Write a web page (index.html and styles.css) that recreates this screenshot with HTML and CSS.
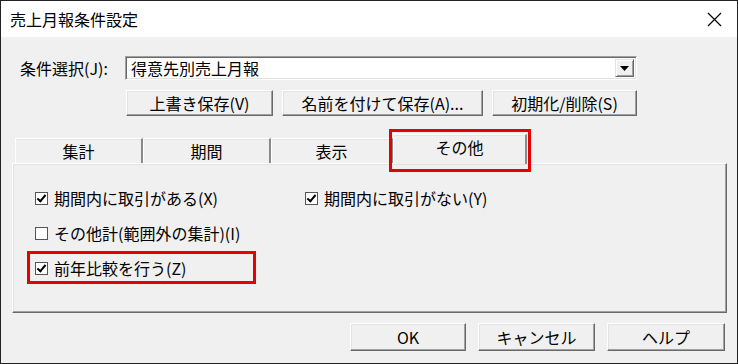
FILE: index.html
```html
<!DOCTYPE html>
<html lang="ja">
<head>
    <meta charset="UTF-8">
    <title>売上月報条件設定</title>
    <link rel="stylesheet" href="styles.css">
</head>
<body>
    <div class="dialog">
        <div class="titlebar">
            <span class="title">売上月報条件設定</span>
            <svg class="close" width="15" height="15" viewBox="0 0 15 15">
                <path d="M1 1 L14 14 M14 1 L1 14" stroke="#000" stroke-width="1.2" fill="none"/>
            </svg>
        </div>
        <div class="body">
            <div class="cond-row">
                <span class="cond-label">条件選択(J):</span>
                <div class="combo">
                    <span class="combo-text">得意先別売上月報</span>
                    <span class="dd-btn">
                        <svg width="9" height="5" viewBox="0 0 9 5"><path d="M0 0 H9 L4.5 5 Z" fill="#000"/></svg>
                    </span>
                </div>
            </div>
            <div class="save-row">
                <button class="btn btn-overwrite">上書き保存(V)</button>
                <button class="btn btn-saveas">名前を付けて保存(A)...</button>
                <button class="btn btn-reset">初期化/削除(S)</button>
            </div>
            <div class="tabs">
                <div class="tab tab-1">集計</div>
                <div class="tab tab-2">期間</div>
                <div class="tab tab-3">表示</div>
                <div class="tab tab-active">その他<span class="mark mark-tab"></span></div>
            </div>
            <div class="panel">
                <div class="opt-row">
                    <label class="check col-1"><span class="box checked"></span>期間内に取引がある(X)</label>
                    <label class="check col-2"><span class="box checked"></span>期間内に取引がない(Y)</label>
                </div>
                <div class="opt-row">
                    <label class="check col-1"><span class="box"></span>その他計(範囲外の集計)(I)</label>
                </div>
                <div class="opt-row opt-marked">
                    <label class="check col-1"><span class="box checked"></span>前年比較を行う(Z)</label>
                    <span class="mark mark-row"></span>
                </div>
            </div>
            <div class="footer-row">
                <button class="btn btn-ok">OK</button>
                <button class="btn btn-cancel">キャンセル</button>
                <button class="btn btn-help">ヘルプ</button>
            </div>
        </div>
    </div>
</body>
</html>
```

FILE: styles.css
```css
body {
    margin: 0;
    padding: 0;
    font-family: "Noto Sans CJK JP", "Noto Sans", sans-serif;
    font-size: 16px;
    color: #000;
}
.dialog {
    width: 738px;
    height: 364px;
    box-sizing: border-box;
    border: 1px solid #222;
    background-color: #f0f0f0;
    display: flex;
    flex-direction: column;
}
.titlebar {
    height: 36px;
    background-color: #fff;
    display: flex;
    align-items: center;
    justify-content: space-between;
    padding: 0 15px 0 9px;
}
.title {
    font-size: 16px;
    line-height: 20px;
}
.body {
    flex: 1;
    position: relative;
}
.cond-row {
    display: flex;
    align-items: center;
    margin-top: 19px;
    padding-left: 19px;
    height: 24px;
}
.cond-label {
    width: 105px;
    line-height: 20px;
}
.combo {
    width: 512px;
    height: 24px;
    box-sizing: border-box;
    background-color: #fff;
    border: 1px solid;
    border-color: #a0a0a0 #fff #fff #a0a0a0;
    box-shadow: inset 1px 1px #696969, inset -1px -1px #e3e3e3;
    display: flex;
    align-items: center;
    justify-content: space-between;
    padding: 0 2px 0 5px;
}
.combo-text {
    line-height: 20px;
}
.dd-btn {
    width: 19px;
    height: 18px;
    box-sizing: border-box;
    background-color: #f0f0f0;
    border: 1px solid;
    border-color: #e3e3e3 #696969 #696969 #e3e3e3;
    box-shadow: inset 1px 1px #fff, inset -1px -1px #a0a0a0;
    display: flex;
    align-items: center;
    justify-content: center;
}
.save-row {
    display: flex;
    gap: 9px;
    margin-top: 10px;
    padding-left: 125px;
}
.btn {
    height: 26px;
    box-sizing: border-box;
    font-family: inherit;
    font-size: 16px;
    line-height: 20px;
    padding: 0;
    color: #000;
    background-color: #f0f0f0;
    border: 1px solid;
    border-color: #fff #696969 #696969 #fff;
    box-shadow: inset -1px -1px #a0a0a0, inset 1px 1px #e3e3e3;
}
.btn-overwrite { width: 147px; }
.btn-saveas { width: 201px; }
.btn-reset { width: 145px; }
.tabs {
    display: flex;
    align-items: flex-end;
    height: 29px;
    margin-top: 18px;
    padding-left: 14px;
}
.tab {
    height: 25px;
    box-sizing: border-box;
    border-top: 1px solid #fff;
    border-left: 1px solid #fff;
    border-right: 2px solid #8a8a8a;
    box-shadow: inset 0 1px #e3e3e3;
    text-align: center;
    line-height: 24px;
}
.tab-1 { width: 128px; }
.tab-2 { width: 128px; }
.tab-3 { width: 122px; }
.tab-active {
    width: 134px;
    height: 30px;
    margin-bottom: -1px;
    position: relative;
    background-color: #f0f0f0;
    line-height: 24px;
    z-index: 1;
}
.mark {
    position: absolute;
    border: 3px solid #e60000;
    box-sizing: border-box;
    pointer-events: none;
}
.mark-tab {
    left: -5px;
    right: -6px;
    top: -6px;
    bottom: -8px;
}
.panel {
    width: 715px;
    height: 150px;
    box-sizing: border-box;
    margin-left: 11px;
    border: 1px solid;
    border-color: #fff #696969 #696969 #fff;
    box-shadow: inset -1px -1px #a0a0a0, inset 1px 1px #e3e3e3;
    padding-top: 24px;
    display: flex;
    flex-direction: column;
    gap: 15px;
}
.opt-row {
    display: flex;
    height: 20px;
    align-items: center;
    position: relative;
}
.check {
    display: flex;
    align-items: center;
    line-height: 20px;
}
.col-1 {
    margin-left: 22px;
    width: 270px;
}
.box {
    width: 13px;
    height: 13px;
    box-sizing: border-box;
    border: 1px solid #555;
    background-color: #fff;
    margin-right: 6px;
    position: relative;
}
.box.checked::after {
    content: "";
    position: absolute;
    left: 3px;
    top: 0px;
    width: 3px;
    height: 7px;
    border: solid #000;
    border-width: 0 2px 2px 0;
    transform: rotate(40deg);
}
.mark-row {
    left: 14px;
    top: -7px;
    width: 229px;
    height: 33px;
}
.footer-row {
    display: flex;
    justify-content: flex-end;
    gap: 12px;
    margin-top: 10px;
    padding-right: 12px;
}
.footer-row .btn {
    height: 28px;
}
.btn-ok { width: 116px; }
.btn-cancel { width: 117px; }
.btn-help { width: 118px; }
```
